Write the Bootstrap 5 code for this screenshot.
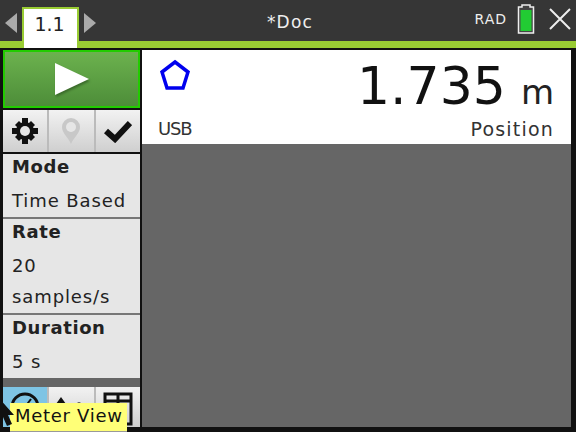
<!DOCTYPE html>
<html lang="en">
<head>
    <meta charset="UTF-8">
    <title>Meter View</title>
    <link href="https://cdn.jsdelivr.net/npm/bootstrap@5.3.3/dist/css/bootstrap.min.css" rel="stylesheet">
    <style>
        html, body { width: 576px; height: 432px; overflow: hidden; background: #111; }
        body { font-family: "DejaVu Sans", sans-serif; color: #222; position: relative; }
        .top-bar { height: 41px; background: #363636; color: #eee; padding-left: 5px; }
        .tab-arrow { width: 0; height: 0; margin-top: 13px; border-top: 10px solid transparent; border-bottom: 10px solid transparent; }
        .tab-prev { border-right: 12px solid #aaa; margin-right: 5px; }
        .tab-next { border-left: 12px solid #aaa; margin-left: 5px; }
        .page-tab { width: 57px; height: 41px; margin-top: 7px; background: #fff; color: #222; border: 2px solid #99cc33; border-bottom: 0; font-size: 19px; padding-right: 2px; z-index: 2; }
        .doc-title { left: 0; right: 0; top: 10px; text-align: center; font-size: 17px; letter-spacing: 1.2px; padding-left: 4px; }
        .status-rad { font-size: 14px; letter-spacing: 1px; margin-right: 10px; }
        .status-batt { margin-right: 13px; }
        .green-line { height: 7px; background: #99cc33; }
        .work-area { height: 379px; padding: 2px 5px 0 3px; gap: 2px; }
        .side-panel { width: 137px; gap: 2px; }
        .play-btn { height: 59px; border: 2px solid #22cc00; background: linear-gradient(#6cb24e, #4d8d39); }
        .play-btn svg { filter: drop-shadow(1px 2px 1px #3a6a2a); }
        .tool-row { height: 42px; gap: 2px; background: #bbb; }
        .tool-btn { flex: 1; background: linear-gradient(#f2f2f2, #cfcfcf); }
        .setting-list { background: #777; gap: 2px; }
        .setting-item { background: #e6e6e6; padding: 0 0 1px 9px; font-size: 18px; line-height: 31px; letter-spacing: .9px; }
        .setting-item b { display: block; line-height: 25px; margin-bottom: 6px; letter-spacing: .6px; }
        .grey-gap { height: 9px; background: #666; margin-top: -2px; margin-bottom: -2px; }
        .view-row { height: 41px; gap: 2px; background: #bbb; }
        .view-active { background: #7ec4e4; }
        .meter-pane { flex: 1; background: #666; }
        .meter-head { height: 94px; background: #fff; padding: 0 17px 0 16px; }
        .meter-value { font-size: 52px; line-height: 1; color: #111; }
        .meter-unit { font-size: 34px; margin-left: 15px; }
        .meter-top { padding-top: 10px; }
        .pent-icon { margin: -1px 0 0 1px; }
        .meter-label { font-size: 18px; line-height: 22px; margin-bottom: 6px; color: #333; }
        .label-src { letter-spacing: -1.2px; }
        .label-kind { font-size: 19px; letter-spacing: 1.2px; }
        .hint-box { left: 10px; top: 403px; width: 117px; height: 28px; background: #ffff77; font-size: 18px; line-height: 26px; letter-spacing: .7px; padding-left: 5px; color: #111; white-space: nowrap; box-shadow: 0 1px 0 #999; }
        .mouse-arrow { left: 0; top: 398px; }
    </style>
</head>
<body>
<div class="top-bar d-flex align-items-start position-relative">
    <div class="tab-arrow tab-prev"></div>
    <div class="page-tab d-flex align-items-center justify-content-center pb-2">1.1</div>
    <div class="tab-arrow tab-next"></div>
    <div class="doc-title position-absolute">*Doc</div>
    <div class="d-flex align-items-center ms-auto mt-1">
        <span class="status-rad">RAD</span>
        <svg width="18" height="30" viewBox="0 0 18 30" class="status-batt"><path d="M5 1h8v2h3.500v26h-15v-26h3.500z" fill="#444" stroke="#eee" stroke-width="1.500"/><rect x="3.500" y="6" width="11" height="21" fill="#22cc33"/></svg>
        <svg width="24" height="24" viewBox="0 0 24 24" class="me-1"><path d="M2 2l20 20M22 2l-20 20" stroke="#eee" stroke-width="2"/></svg>
    </div>
</div>
<div class="green-line"></div>
<div class="work-area d-flex">
    <div class="side-panel d-flex flex-column">
        <div class="play-btn d-flex align-items-center justify-content-center">
            <svg width="36" height="34" viewBox="0 0 36 34"><path d="M1 1l34 16l-34 16z" fill="#fff"/></svg>
        </div>
        <div class="tool-row d-flex">
            <div class="tool-btn d-flex align-items-center justify-content-center">
                <svg width="26" height="26" viewBox="0 0 26 26"><g fill="#111"><circle cx="13" cy="13" r="9"/><path d="M10 0h6v6h-6zM10 20h6v6h-6zM0 10h6v6h-6zM20 10h6v6h-6zM3 7l4-4 4 4-4 4zM15 7l4-4 4 4-4 4zM3 19l4-4 4 4-4 4zM15 19l4-4 4 4-4 4z"/></g><circle cx="13" cy="13" r="5" fill="#e6e6e6"/></svg>
            </div>
            <div class="tool-btn d-flex align-items-center justify-content-center">
                <svg width="20" height="28" viewBox="0 0 20 28"><path d="M10 1a9 9 0 0 1 9 9c0 6-6 10-9 17c-3-7-9-11-9-17a9 9 0 0 1 9-9z" fill="#c8c8c8"/><circle cx="10" cy="10" r="5" fill="#e6e6e6"/></svg>
            </div>
            <div class="tool-btn d-flex align-items-center justify-content-center">
                <svg width="28" height="24" viewBox="0 0 28 24"><path d="M2 12l9 8l15-16" fill="none" stroke="#111" stroke-width="6"/></svg>
            </div>
        </div>
        <div class="setting-list d-flex flex-column">
            <div class="setting-item"><b>Mode</b>Time Based</div>
            <div class="setting-item"><b>Rate</b>20<br>samples/s</div>
            <div class="setting-item"><b>Duration</b>5 s</div>
        </div>
        <div class="grey-gap"></div>
        <div class="view-row d-flex">
            <div class="tool-btn view-active d-flex align-items-start justify-content-center pt-1">
                <svg width="32" height="32" viewBox="0 0 32 32"><circle cx="16" cy="16" r="13" fill="none" stroke="#111" stroke-width="3"/><path d="M16 16l6-8" stroke="#111" stroke-width="2"/></svg>
            </div>
            <div class="tool-btn d-flex align-items-start justify-content-center pt-2">
                <svg width="32" height="32" viewBox="0 0 32 32"><path d="M6 30v-22" stroke="#111" stroke-width="3"/><path d="M1 9l5-7l5 7z" fill="#111"/><circle cx="24" cy="9" r="2" fill="#555"/></svg>
            </div>
            <div class="tool-btn d-flex align-items-start justify-content-center pt-1">
                <svg width="30" height="36" viewBox="0 0 30 36"><path d="M2 3h26v30h-26zM15 3v30M2 10h26" fill="none" stroke="#111" stroke-width="3"/></svg>
            </div>
        </div>
    </div>
    <div class="meter-pane">
        <div class="meter-head d-flex flex-column">
            <div class="d-flex justify-content-between align-items-start meter-top">
                <svg width="32" height="32" viewBox="0 0 32 32" class="pent-icon"><path d="M16 3l13 10l-5 16h-16l-5-16z" fill="none" stroke="#0000ee" stroke-width="3.500"/></svg>
                <div class="d-flex align-items-baseline"><span class="meter-value">1.735</span><span class="meter-unit">m</span></div>
            </div>
            <div class="d-flex justify-content-between meter-label mt-auto">
                <span class="label-src">USB</span><span class="label-kind">Position</span>
            </div>
        </div>
    </div>
</div>
<div class="hint-box position-absolute">Meter View</div>
<svg class="mouse-arrow position-absolute" width="16" height="30" viewBox="0 0 16 30"><path d="M-1 0l15 17h-6l4 9l-5 2l-4-9l-4 3z" fill="#111"/></svg>
</body>
</html>
